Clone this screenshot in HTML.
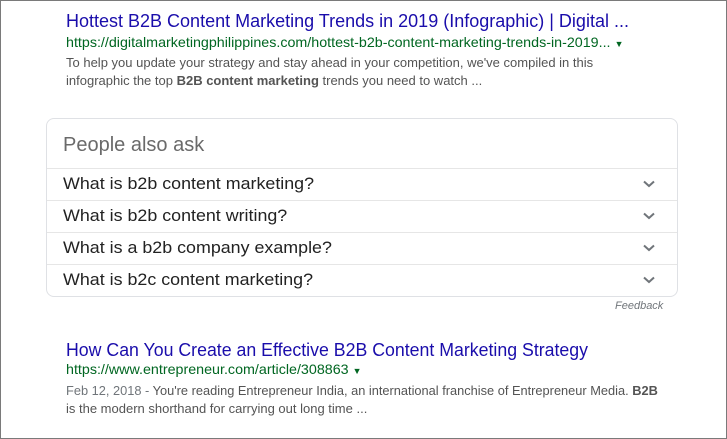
<!DOCTYPE html>
<html><head><style>
body{margin:0;width:727px;height:439px;overflow:hidden;background:#fff;font-family:"Liberation Sans",Arial,sans-serif;}
.frame{position:absolute;left:0;top:0;width:725px;height:437px;border:1px solid #7a7a7a;}
.a{position:absolute;white-space:nowrap;transform-origin:0 0;}
.t{color:#1a0dab;font-size:18px;}
.u{color:#006621;font-size:14px;}
.s{color:#545454;font-size:13px;}
.q{color:#222;font-size:17px;transform:scaleX(1.05);}
.box{position:absolute;left:46px;top:118px;width:630px;height:177px;border:1px solid #dfe1e5;border-radius:8px;}
.hr{position:absolute;left:47px;width:630px;height:1px;background:#e6e6e6;}
.chev{position:absolute;left:643px;}
</style></head><body>
<div class="frame"></div>
<div class="a t" style="left:66px;top:11px">Hottest B2B Content Marketing Trends in 2019 (Infographic) | Digital ...</div>
<div class="a u" style="left:66px;top:34px;transform:scaleX(1.02)">https://digitalmarketingphilippines.com/hottest-b2b-content-marketing-trends-in-2019... <span style="font-size:9px">▼</span></div>
<div class="a s" style="left:66px;top:55px">To help you update your strategy and stay ahead in your competition, we've compiled in this</div>
<div class="a s" style="left:66px;top:73px">infographic the top <b>B2B content marketing</b> trends you need to watch ...</div>
<div class="box"></div>
<div class="a" style="left:63px;top:134px;font-size:20px;color:#6a6a6a">People also ask</div>
<div class="hr" style="top:168px"></div>
<div class="hr" style="top:200px"></div>
<div class="hr" style="top:232px"></div>
<div class="hr" style="top:264px"></div>
<div class="a q" style="left:63px;top:174px">What is b2b content marketing?</div>
<div class="a q" style="left:63px;top:206px">What is b2b content writing?</div>
<div class="a q" style="left:63px;top:238px">What is a b2b company example?</div>
<div class="a q" style="left:63px;top:270px">What is b2c content marketing?</div>
<svg class="chev" style="top:180px" width="12" height="8"><path d="M1 1.5 6 6 11 1.5" fill="none" stroke="#70757a" stroke-width="2"/></svg>
<svg class="chev" style="top:212px" width="12" height="8"><path d="M1 1.5 6 6 11 1.5" fill="none" stroke="#70757a" stroke-width="2"/></svg>
<svg class="chev" style="top:244px" width="12" height="8"><path d="M1 1.5 6 6 11 1.5" fill="none" stroke="#70757a" stroke-width="2"/></svg>
<svg class="chev" style="top:276px" width="12" height="8"><path d="M1 1.5 6 6 11 1.5" fill="none" stroke="#70757a" stroke-width="2"/></svg>
<div class="a" style="left:615px;top:300px;font-size:11px;font-style:italic;color:#70757a">Feedback</div>
<div class="a t" style="left:66px;top:340px;transform:scaleX(0.985)">How Can You Create an Effective B2B Content Marketing Strategy</div>
<div class="a u" style="left:66px;top:361px;transform:scaleX(1.02)">https://www.entrepreneur.com/article/308863 <span style="font-size:9px">▼</span></div>
<div class="a s" style="left:66px;top:383px;transform:scaleX(0.985)"><span style="color:#70757a">Feb 12, 2018 - </span>You're reading Entrepreneur India, an international franchise of Entrepreneur Media. <b>B2B</b></div>
<div class="a s" style="left:66px;top:401px">is the modern shorthand for carrying out long time ...</div>
</body></html>
